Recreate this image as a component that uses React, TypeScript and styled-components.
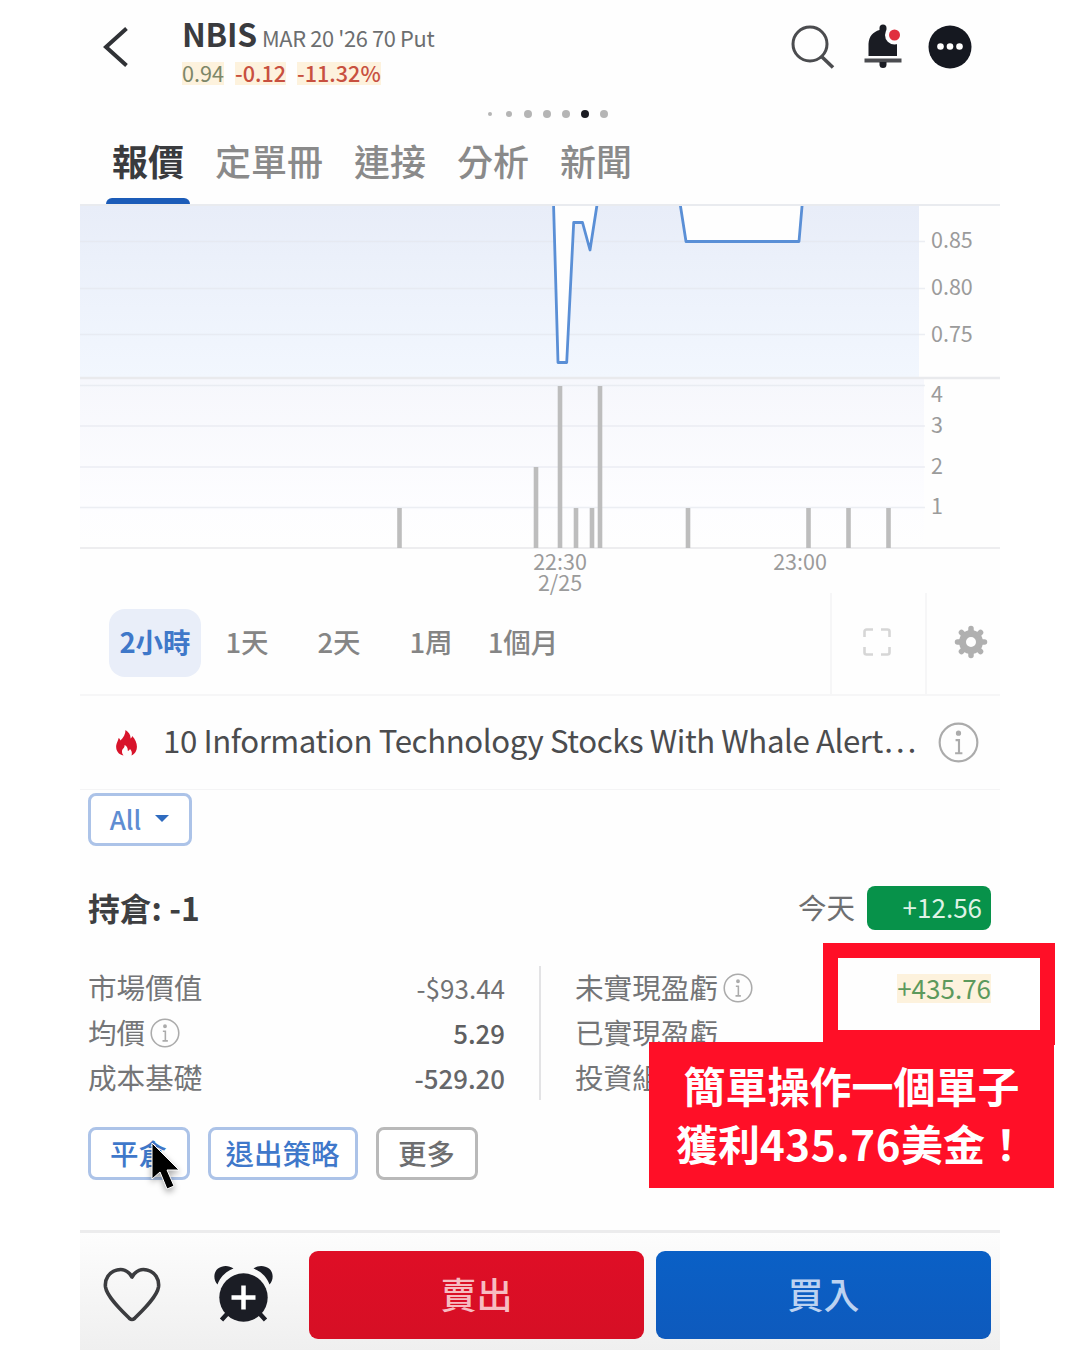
import React from "react";
import styled, { createGlobalStyle } from "styled-components";

const Global = createGlobalStyle`
  * { box-sizing: border-box; }
  body {
    margin: 0;
    background: #fff;
    font-family: "Noto Sans CJK TC", "Noto Sans", sans-serif;
  }
  svg { display: block; flex: none; }
`;

const Stage = styled.div`
  position: relative;
  width: 1080px;
  height: 1350px;
  overflow: hidden;
  background: #fff;
`;

const Phone = styled.main`
  width: 920px;
  height: 1350px;
  margin-left: 80px;
  display: flex;
  flex-direction: column;
  background: #fefefe;
`;

const Header = styled.header`
  height: 98px;
  flex: none;
  display: flex;
  align-items: flex-start;
  padding: 0 28px 0 22px;
`;

const BackSlot = styled.div`
  width: 80px;
  padding-top: 26px;
`;

const Titles = styled.div`
  flex: 1;
  padding-top: 13px;
`;

const TitleLine = styled.div`
  display: flex;
  align-items: baseline;
  gap: 5px;
  height: 40px;
  line-height: 40px;
  white-space: nowrap;
`;

const Symbol = styled.h1`
  margin: 0;
  font-size: 31.8px;
  font-weight: 700;
  letter-spacing: -0.2px;
  color: #3a3b3e;
`;

const Contract = styled.span`
  font-size: 21.8px;
  letter-spacing: -0.35px;
  color: #6c6e70;
`;

const PriceLine = styled.div`
  display: flex;
  gap: 11px;
  margin-top: 9px;
`;

const Tick = styled.span<{ $color: string; $bold?: boolean }>`
  height: 23px;
  line-height: 22px;
  font-size: 21.6px;
  font-weight: ${(p) => (p.$bold ? 500 : 400)};
  color: ${(p) => p.$color};
  background: #fdf2dd;
`;

const HeaderIcons = styled.div`
  display: flex;
  gap: 26px;
  padding-top: 24px;
`;

const SearchSlot = styled.div`
  margin-right: 3px;
`;

const Pager = styled.div`
  height: 31px;
  flex: none;
  display: flex;
  justify-content: center;
  align-items: center;
  gap: 9px;
  padding-left: 14px;
`;

const PagerCell = styled.span`
  width: 10px;
  display: flex;
  justify-content: center;
`;

const PagerDot = styled.i<{ $size: number; $on?: boolean }>`
  width: ${(p) => p.$size}px;
  height: ${(p) => p.$size}px;
  border-radius: 50%;
  background: ${(p) => (p.$on ? "#1b1c22" : "#b5b5b5")};
`;

const Tabs = styled.nav`
  height: 77px;
  flex: none;
  display: flex;
  gap: 19px;
  padding: 0 26px;
  border-bottom: 2px solid #e9ebef;
`;

const Tab = styled.div<{ $active?: boolean }>`
  display: flex;
  flex-direction: column;
  justify-content: space-between;
  padding: 6px 6px 0;
  font-size: 36px;
  line-height: 50px;
  font-weight: ${(p) => (p.$active ? 700 : 500)};
  color: ${(p) => (p.$active ? "#3a3b3e" : "#8a8a8a")};
  &::after {
    content: "";
    height: 6px;
    margin: 0 -6px;
    border-radius: 6px 6px 0 0;
    background: ${(p) => (p.$active ? "#1c5cb8" : "transparent")};
  }
`;

const ChartArea = styled.section`
  height: 387px;
  flex: none;
  svg { overflow: visible; }
`;

const AxisText = styled.text`
  font-size: 21.5px;
  fill: #9b9b9b;
`;

const RangeBar = styled.div`
  height: 103px;
  flex: none;
  display: flex;
  align-items: stretch;
  border-bottom: 2px solid #f6f6f7;
`;

const Ranges = styled.div`
  width: 750px;
  flex: none;
  display: flex;
  align-items: center;
  padding: 0 0 2px 29px;
`;

const Range = styled.button<{ $active?: boolean }>`
  width: 92px;
  height: 68px;
  padding: 0 0 3px;
  border: 0;
  border-radius: 16px;
  font-family: inherit;
  font-size: 27.5px;
  font-weight: ${(p) => (p.$active ? 700 : 500)};
  color: ${(p) => (p.$active ? "#3f78c9" : "#858585")};
  background: ${(p) => (p.$active ? "#e9eef9" : "transparent")};
`;

const ToolCell = styled.div<{ $w: number; $left: number }>`
  width: ${(p) => p.$w}px;
  flex: none;
  display: flex;
  align-items: center;
  padding: 0 0 3px ${(p) => p.$left}px;
  border-left: 2px solid #f6f6f7;
`;

const NewsRow = styled.div`
  height: 94px;
  flex: none;
  display: flex;
  align-items: center;
  padding: 0 21px 0 36px;
  border-bottom: 1px solid #f4f4f5;
`;

const Headline = styled.div`
  flex: 1;
  min-width: 0;
  padding: 0 0 5px 26px;
  font-size: 31.2px;
  letter-spacing: -0.4px;
  line-height: 44px;
  color: #4b4c4e;
  white-space: nowrap;
`;

const Body = styled.section`
  flex: 1;
  padding: 3px 9px 0 8px;
  display: flex;
  flex-direction: column;
`;

const OutlineButton = styled.button<{ $w: number; $muted?: boolean; $plain?: boolean }>`
  width: ${(p) => p.$w}px;
  height: 53px;
  flex: none;
  padding: 0 1px 3px 0;
  display: flex;
  align-items: center;
  justify-content: center;
  gap: 14px;
  border: 3px solid ${(p) => (p.$muted ? "#b9b9b9" : "#acc3e8")};
  border-radius: 8px;
  background: #fff;
  font-family: inherit;
  font-size: ${(p) => (p.$plain ? 26 : 28.5)}px;
  font-weight: 500;
  color: ${(p) => (p.$muted ? "#6d6e70" : p.$plain ? "#5f8dd2" : "#3f78ca")};
`;

const PositionRow = styled.div`
  display: flex;
  align-items: center;
  height: 44px;
  margin-top: 40px;
`;

const Position = styled.div`
  flex: 1;
  padding-bottom: 2px;
  font-size: 31.8px;
  line-height: 42px;
  font-weight: 700;
  color: #3e3f41;
`;

const Today = styled.span`
  padding-bottom: 3px;
  font-size: 28.5px;
  line-height: 41px;
  color: #6e6f71;
  margin-right: 12px;
`;

const Badge = styled.span`
  width: 124px;
  height: 44px;
  padding-right: 9px;
  border-radius: 8px;
  background: #07924a;
  color: #def2e6;
  font-size: 26px;
  line-height: 42px;
  text-align: right;
`;

const Stats = styled.div`
  display: flex;
  height: 134px;
  margin-top: 36px;
`;

const StatColumn = styled.div<{ $left?: boolean }>`
  width: ${(p) => (p.$left ? 453 : 450)}px;
  display: flex;
  flex-direction: column;
  padding: ${(p) => (p.$left ? "0 35px 0 0" : "0 0 0 34px")};
  ${(p) => (p.$left ? "border-right: 2px solid #e3e3e5;" : "")}
`;

const Stat = styled.div`
  display: flex;
  align-items: center;
  justify-content: space-between;
  height: 45px;
  flex: none;
`;

const StatLabel = styled.span`
  display: flex;
  align-items: center;
  gap: 5px;
  padding-bottom: 3px;
  font-size: 28.6px;
  line-height: 40px;
  color: #747577;
  svg { margin-top: 2px; }
`;

const StatValue = styled.span<{ $tone?: string; $medium?: boolean; $flash?: boolean }>`
  margin-right: ${(p) => (p.$flash ? 0 : -1)}px;
  font-size: ${(p) => (p.$medium ? 25.8 : 26)}px;
  font-weight: ${(p) => (p.$medium ? 500 : 400)};
  line-height: 28px;
  padding-bottom: 1px;
  color: ${(p) => p.$tone ?? "#707173"};
  background: ${(p) => (p.$flash ? "#fdf2dd" : "transparent")};
`;

const Actions = styled.div`
  display: flex;
  gap: 18px;
  margin-top: 27px;
`;

const Footer = styled.footer`
  height: 120px;
  flex: none;
  display: flex;
  align-items: flex-start;
  padding: 18px 9px 0 22px;
  border-top: 3px solid #ececed;
  background: linear-gradient(#fdfdfd, #efefef);
`;

const FooterIcons = styled.div`
  width: 207px;
  display: flex;
  gap: 51px;
  padding-top: 13px;
`;

const Trade = styled.button<{ $buy?: boolean }>`
  width: 335px;
  height: 88px;
  margin-right: ${(p) => (p.$buy ? 0 : 12)}px;
  padding: 0 0 4px;
  flex: none;
  border: 0;
  border-radius: 9px;
  font-family: inherit;
  font-size: 36px;
  font-weight: 500;
  color: ${(p) => (p.$buy ? "#bcd2f1" : "#f7bcc1")};
  background: ${(p) => (p.$buy ? "linear-gradient(#0a60c6, #0e5abd)" : "linear-gradient(#df0e26, #d60f25)")};
`;

const Highlight = styled.div`
  position: absolute;
  left: 823px;
  top: 943px;
  width: 232px;
  height: 102px;
  border: 15px solid #ff0f27;
`;

const Callout = styled.div`
  position: absolute;
  left: 649px;
  top: 1042px;
  width: 405px;
  height: 146px;
  padding-top: 14px;
  background: #ff0f27;
  color: #fff;
  font-size: 42px;
  line-height: 58px;
  font-weight: 700;
  text-align: center;
  white-space: nowrap;
`;

const Amount = styled.span`
  letter-spacing: 0.6px;
`;

const Cursor = styled.svg`
  position: absolute;
  left: 146px;
  top: 1138px;
  filter: drop-shadow(0 3px 3px rgba(0, 0, 0, 0.35));
`;

const InfoIcon = ({ size }: { size: number }) => (
  <svg width={size} height={size} viewBox="0 0 42 42" fill="none" stroke="#ababab" strokeWidth="2.2">
    <circle cx="21" cy="21" r="19.3" />
    <path d="M18 18.5h3.5V32M17.5 32h7.5" />
    <circle cx="21" cy="11.5" r="1.6" fill="#ababab" />
  </svg>
);

const priceLine = "553.5,203 558,362.5 566.7,362.5 573.7,222.5 582.5,222.5 590,250 597.3,203";
const dipLine = "680,203 686,241.5 799,241.5 802.3,203";
const volumes = [
  [399.5, 508], [536, 467], [560, 386], [576, 508], [592, 508],
  [600, 386], [688, 508], [808.5, 508], [848.5, 508], [888.5, 508],
];
const priceTicks: [string, number, number][] = [["0.85", 241.5, 248], ["0.80", 288.5, 295], ["0.75", 334.5, 341.5]];
const volumeTicks: [string, number, number][] = [["4", 385.5, 401.5], ["3", 426, 432.5], ["2", 467, 473.5], ["1", 507.5, 514]];

const Chart = () => (
  <svg width="920" height="387" viewBox="80 206 920 387">
    <defs>
      <linearGradient id="priceFill" x1="0" y1="0" x2="0" y2="1">
        <stop offset="0" stopColor="#e8edf8" />
        <stop offset="0.6" stopColor="#eef3fc" />
        <stop offset="1" stopColor="#f2f7fe" />
      </linearGradient>
      <linearGradient id="volumeFill" x1="0" y1="0" x2="0" y2="1">
        <stop offset="0" stopColor="#f6f7fc" />
        <stop offset="0.75" stopColor="#fdfdff" />
        <stop offset="1" stopColor="#fefefe" />
      </linearGradient>
      <clipPath id="plot">
        <rect x="80" y="206" width="920" height="387" />
      </clipPath>
    </defs>
    <rect x="80" y="206" width="839" height="171" fill="url(#priceFill)" />
    <rect x="80" y="379" width="844" height="169" fill="url(#volumeFill)" />
    {[...priceTicks, ...volumeTicks].map(([label, line]) => (
      <line key={label} x1="80" x2="925" y1={line} y2={line} stroke="#e4e7ee" strokeOpacity="0.7" strokeWidth="1.5" />
    ))}
    <g fill="#fefefe" stroke="#5a8fd6" strokeWidth="2.8" strokeLinejoin="round" clipPath="url(#plot)">
      <polygon points={priceLine} />
      <polygon points={dipLine} />
    </g>
    <line x1="80" x2="1000" y1="378" y2="378" stroke="#e9eaed" strokeWidth="2.4" />
    <line x1="80" x2="1000" y1="548" y2="548" stroke="#ededef" strokeWidth="2" />
    {volumes.map(([x, top]) => (
      <rect key={x} x={x - 2.3} y={top} width="4.6" height={548 - top} fill="#bdbdbd" />
    ))}
    {[...priceTicks, ...volumeTicks].map(([label, , base]) => (
      <AxisText key={label} x="931" y={base}>{label}</AxisText>
    ))}
    <AxisText textAnchor="middle">
      <tspan x="560" y="570">22:30</tspan>
      <tspan x="560" y="591">2/25</tspan>
    </AxisText>
    <AxisText x="800" y="570" textAnchor="middle">23:00</AxisText>
  </svg>
);

const teeth = [0, 45, 90, 135];

export default function App() {
  return (
    <Stage>
      <Global />
      <Phone>
        <Header>
          <BackSlot>
            <svg width="28" height="42" viewBox="0 0 28 42" fill="none" stroke="#303236" strokeWidth="4">
              <path d="M24.5 2.5 4 21l20.5 18.5" />
            </svg>
          </BackSlot>
          <Titles>
            <TitleLine>
              <Symbol>NBIS</Symbol>
              <Contract>MAR 20 '26 70 Put</Contract>
            </TitleLine>
            <PriceLine>
              <Tick $color="#7d8768">0.94</Tick>
              <Tick $color="#c8503f" $bold>-0.12</Tick>
              <Tick $color="#c8503f" $bold>-11.32%</Tick>
            </PriceLine>
          </Titles>
          <HeaderIcons>
            <SearchSlot>
              <svg width="44" height="46" viewBox="0 0 44 46" fill="none" stroke="#4b4c4f" strokeWidth="3">
                <circle cx="19" cy="20" r="17" />
                <path d="M30 32l12 11.500" strokeWidth="3.600" />
              </svg>
            </SearchSlot>
            <svg width="38" height="46" viewBox="0 0 38 46">
              <path d="M19 .5a3.500 3.500 0 0 1 3.500 3.500v2.500C29 8.500 32.500 13 33 20.500v11.500H4.500V20C5 12 9 8 15.500 6V4A3.500 3.500 0 0 1 19 .5z" fill="#1a1c23" />
              <path d="M.5 34.500h37v4H.5z" fill="#4b4c50" />
              <path d="M15.500 38h7v2.500a3.500 3.500 0 0 1-7 0z" fill="#1a1c23" />
              <circle cx="30.500" cy="11" r="9.500" fill="#fefefe" />
              <circle cx="30.500" cy="11" r="5.500" fill="#e0303f" />
            </svg>
            <svg width="44" height="46" viewBox="0 0 44 46">
              <circle cx="22" cy="23" r="21.500" fill="#151820" />
              <g fill="#fff">
                <circle cx="12.500" cy="22.500" r="3.300" />
                <circle cx="22" cy="22.500" r="3.300" />
                <circle cx="31.500" cy="22.500" r="3.300" />
              </g>
            </svg>
          </HeaderIcons>
        </Header>
        <Pager>
          {[4, 6, 8, 8, 8, 8, 8].map((size, i) => (
            <PagerCell key={i}><PagerDot $size={size} $on={i === 5} /></PagerCell>
          ))}
        </Pager>
        <Tabs>
          {["報價", "定單冊", "連接", "分析", "新聞"].map((t, i) => (
            <Tab key={t} $active={i === 0}>{t}</Tab>
          ))}
        </Tabs>
        <ChartArea><Chart /></ChartArea>
        <RangeBar>
          <Ranges>
            {["2小時", "1天", "2天", "1周", "1個月"].map((t, i) => (
              <Range key={t} $active={i === 0}>{t}</Range>
            ))}
          </Ranges>
          <ToolCell $w={95} $left={31}>
            <svg width="28" height="28" viewBox="0 0 28 28" fill="none" stroke="#d6d6d6" strokeWidth="2.600">
              <path d="M1.500 9V3.500a2 2 0 0 1 2-2H10M18 1.500h6.500a2 2 0 0 1 2 2V9M26.500 19v5.500a2 2 0 0 1-2 2H18M10 26.500H3.500a2 2 0 0 1-2-2V19" />
            </svg>
          </ToolCell>
          <ToolCell $w={75} $left={27}>
            <svg width="34" height="34" viewBox="-17 -17 34 34" stroke="#b0b0b0" fill="none">
              <circle r="8.500" strokeWidth="7" />
              {teeth.map((a) => (
                <g key={a} transform={`rotate(${a})`} strokeWidth="5.500" strokeLinecap="round">
                  <path d="M0-13.500v3M0 13.500v-3" />
                </g>
              ))}
            </svg>
          </ToolCell>
        </RangeBar>
        <NewsRow>
          <svg width="21" height="26" viewBox="0 0 21 26">
            <path d="M9.500 0c3.500 2.500 5.300 5 5 8.500 1-.5 1.500-1.200 1.700-2.500 4.500 4.500 6 11 3.600 15.500-.9 1.700-2.300 3-4.300 4 .8-2.500.2-5-1.500-6.500-.6 1.200-1.200 1.700-2.200 2C12 18 10.700 16 8.500 15c.6 3-2.500 3.500-2.500 6.500 0 1.600.6 2.800 1.500 4C2 24.500-.3 20 .2 15.500.5 13 2 11 2.700 8c1 .7 1.500 1.500 1.700 2.500C7.500 8 9.500 4 9.500 0z" fill="#d8142b" />
          </svg>
          <Headline>10 Information Technology Stocks With Whale Alert…</Headline>
          <InfoIcon size={41} />
        </NewsRow>
        <Body>
          <OutlineButton $w={104} $plain>
            All
            <svg width="14" height="7" viewBox="0 0 14 7"><path d="M0 0h14L7 7z" fill="#2f6bbf" /></svg>
          </OutlineButton>
          <PositionRow>
            <Position>持倉: -1</Position>
            <Today>今天</Today>
            <Badge>+12.56</Badge>
          </PositionRow>
          <Stats>
            <StatColumn $left>
              <Stat><StatLabel>市場價值</StatLabel><StatValue>-$93.44</StatValue></Stat>
              <Stat><StatLabel>均價<InfoIcon size={30} /></StatLabel><StatValue $medium $tone="#5e5f61">5.29</StatValue></Stat>
              <Stat><StatLabel>成本基礎</StatLabel><StatValue $medium $tone="#66676a">-529.20</StatValue></Stat>
            </StatColumn>
            <StatColumn>
              <Stat><StatLabel>未實現盈虧<InfoIcon size={30} /></StatLabel><StatValue $flash $tone="#5c995c">+435.76</StatValue></Stat>
              <Stat><StatLabel>已實現盈虧</StatLabel></Stat>
              <Stat><StatLabel>投資組</StatLabel></Stat>
            </StatColumn>
          </Stats>
          <Actions>
            <OutlineButton $w={102}>平倉</OutlineButton>
            <OutlineButton $w={150}>退出策略</OutlineButton>
            <OutlineButton $w={102} $muted>更多</OutlineButton>
          </Actions>
        </Body>
        <Footer>
          <FooterIcons>
            <svg width="60" height="60" viewBox="0 0 60 60" fill="none" stroke="#3b3c3f" strokeWidth="3.600" strokeLinejoin="round">
              <path d="M30 13C26 6 20 4.500 15 6 7 8 2.500 15 3.500 23 5 33 20 47 27.500 54.500q2.500 2 5 0C40 47 55 33 56.500 23 57.500 15 53 8 45 6 40 4.500 34 6 30 13z" />
            </svg>
            <svg width="60" height="60" viewBox="0 0 60 60">
              <path d="M4.500 20.500C0 16 .5 8 5 4.500 9.500 1 16 1 20.500 4.500 13 7.500 7.500 12.500 4.500 20.500zM56.500 20.500C61 16 60.500 8 56 4.500 51.500 1 45 1 40.500 4.500 48 7.500 53.500 12.500 56.500 20.500z" fill="#1b1d25" />
              <path d="M14 50l-5.500 6M47 50l5.500 6" stroke="#1b1d25" strokeWidth="4.500" />
              <circle cx="30.500" cy="33.500" r="24.200" fill="#1b1d25" />
              <path d="M30.500 21.500v24M18.500 33.500h24" stroke="#fff" strokeWidth="4.500" />
            </svg>
          </FooterIcons>
          <Trade>賣出</Trade>
          <Trade $buy>買入</Trade>
        </Footer>
      </Phone>
      <Cursor width="38" height="58" viewBox="0 0 38 58">
        <path d="M6 5v36l8-7 7 17 7-3-7-16h12z" fill="#000" stroke="#fff" strokeWidth="1" />
      </Cursor>
      <Highlight />
      <Callout>簡單操作一個單子<br />獲利<Amount>435.76</Amount>美金！</Callout>
    </Stage>
  );
}
